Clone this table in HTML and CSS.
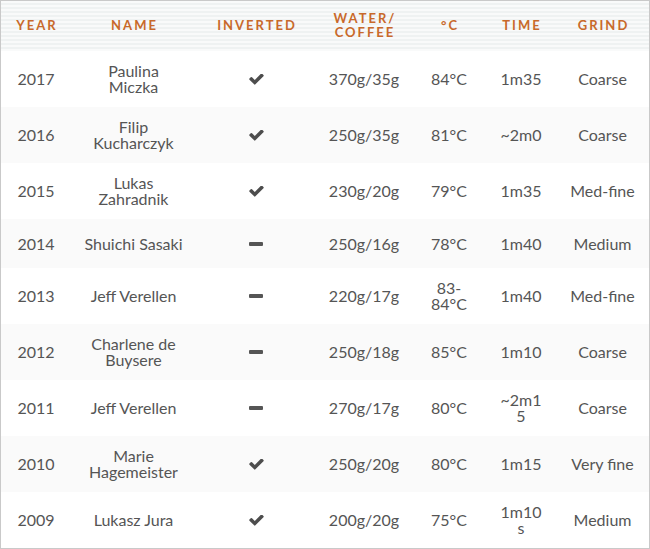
FILE: index.html
```html
<!DOCTYPE html>
<html lang="en">
<head>
<meta charset="utf-8">
<title>Brewers Cup</title>
<link rel="stylesheet" href="styles.css">
</head>
<body>
<div class="board">
  <table class="recipes">
    <colgroup>
      <col class="c-year"><col class="c-name"><col class="c-inv"><col class="c-ratio"><col class="c-temp"><col class="c-time"><col class="c-grind">
    </colgroup>
    <thead>
      <tr>
        <th>YEAR</th><th>NAME</th><th>INVERTED</th><th>WATER/<br>COFFEE</th><th>°C</th><th>TIME</th><th>GRIND</th>
      </tr>
    </thead>
    <tbody>
      <tr><td>2017</td><td class="name">Paulina Miczka</td><td><span class="icon check"><svg viewBox="100 400 1600 1150"><path d="M1671 566q0 40-28 68l-724 724-136 136q-28 28-68 28t-68-28l-136-136-362-362q-28-28-28-68t28-68l136-136q28-28 68-28t68 28l294 295 656-657q28-28 68-28t68 28l136 136q28 28 28 68z"/></svg></span></td><td>370g/35g</td><td class="temp">84°C</td><td class="time">1m35</td><td>Coarse</td></tr>
      <tr><td>2016</td><td class="name">Filip Kucharczyk</td><td><span class="icon check"><svg viewBox="100 400 1600 1150"><path d="M1671 566q0 40-28 68l-724 724-136 136q-28 28-68 28t-68-28l-136-136-362-362q-28-28-28-68t28-68l136-136q28-28 68-28t68 28l294 295 656-657q28-28 68-28t68 28l136 136q28 28 28 68z"/></svg></span></td><td>250g/35g</td><td class="temp">81°C</td><td class="time">~2m0</td><td>Coarse</td></tr>
      <tr><td>2015</td><td class="name">Lukas Zahradnik</td><td><span class="icon check"><svg viewBox="100 400 1600 1150"><path d="M1671 566q0 40-28 68l-724 724-136 136q-28 28-68 28t-68-28l-136-136-362-362q-28-28-28-68t28-68l136-136q28-28 68-28t68 28l294 295 656-657q28-28 68-28t68 28l136 136q28 28 28 68z"/></svg></span></td><td>230g/20g</td><td class="temp">79°C</td><td class="time">1m35</td><td>Med-fine</td></tr>
      <tr><td>2014</td><td class="name">Shuichi Sasaki</td><td><span class="icon"><span class="minus"></span></span></td><td>250g/16g</td><td class="temp">78°C</td><td class="time">1m40</td><td>Medium</td></tr>
      <tr><td>2013</td><td class="name">Jeff Verellen</td><td><span class="icon"><span class="minus"></span></span></td><td>220g/17g</td><td class="temp">83-84°C</td><td class="time">1m40</td><td>Med-fine</td></tr>
      <tr><td>2012</td><td class="name">Charlene de Buysere</td><td><span class="icon"><span class="minus"></span></span></td><td>250g/18g</td><td class="temp">85°C</td><td class="time">1m10</td><td>Coarse</td></tr>
      <tr><td>2011</td><td class="name">Jeff Verellen</td><td><span class="icon"><span class="minus"></span></span></td><td>270g/17g</td><td class="temp">80°C</td><td class="time">~2m15</td><td>Coarse</td></tr>
      <tr><td>2010</td><td class="name">Marie Hagemeister</td><td><span class="icon check"><svg viewBox="100 400 1600 1150"><path d="M1671 566q0 40-28 68l-724 724-136 136q-28 28-68 28t-68-28l-136-136-362-362q-28-28-28-68t28-68l136-136q28-28 68-28t68 28l294 295 656-657q28-28 68-28t68 28l136 136q28 28 28 68z"/></svg></span></td><td>250g/20g</td><td class="temp">80°C</td><td class="time">1m15</td><td>Very fine</td></tr>
      <tr><td>2009</td><td class="name">Lukasz Jura</td><td><span class="icon check"><svg viewBox="100 400 1600 1150"><path d="M1671 566q0 40-28 68l-724 724-136 136q-28 28-68 28t-68-28l-136-136-362-362q-28-28-28-68t28-68l136-136q28-28 68-28t68 28l294 295 656-657q28-28 68-28t68 28l136 136q28 28 28 68z"/></svg></span></td><td>200g/20g</td><td class="temp">75°C</td><td class="time">1m10s</td><td>Medium</td></tr>
    </tbody>
  </table>
</div>
</body>
</html>
```

FILE: styles.css
```css
html, body {
  margin: 0;
  padding: 0;
  background: #fff;
}

.board {
  width: 648px;
  border: 1px solid #c9c9c9;
  font-family: Lato, "Open Sans", sans-serif;
}

.recipes {
  width: 648px;
  border-collapse: collapse;
  table-layout: fixed;
}

.c-year { width: 70px; }
.c-name { width: 125px; }
.c-inv { width: 120px; }
.c-ratio { width: 96px; }
.c-temp { width: 74px; }
.c-time { width: 70px; }
.c-grind { width: 93px; }

.recipes thead th {
  background: repeating-linear-gradient(to bottom, #f9fafa 0, #f9fafa 2px, #eff2f2 2px, #eff2f2 4px);
  color: #c8692b;
  font-weight: 700;
  font-size: 13px;
  line-height: 14px;
  letter-spacing: 2px;
  padding: 10px 2px 12px 4px;
  text-align: center;
  vertical-align: middle;
}

.recipes tbody td {
  color: #555;
  font-size: 16px;
  line-height: 16px;
  text-align: center;
  vertical-align: middle;
  padding: 12px 8px;
}

.recipes tbody tr:nth-child(even) td {
  background: #fafafa;
}

.recipes tbody td.name {
  padding-left: 12px;
  padding-right: 12px;
}

.recipes tbody td.temp {
  padding-left: 16px;
  padding-right: 16px;
}

.recipes tbody td.time {
  padding-left: 14px;
  padding-right: 14px;
  word-break: break-all;
}

.icon {
  display: flex;
  height: 25px;
  align-items: center;
  justify-content: center;
}

.icon svg {
  width: 15px;
  height: 11px;
  fill: #4d4d4d;
}

.minus {
  display: block;
  width: 14px;
  height: 4px;
  border-radius: 1px;
  background: #555;
}
```
